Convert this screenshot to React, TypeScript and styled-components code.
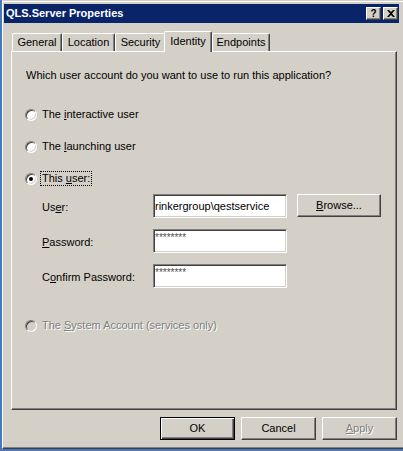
import React from "react";
import styled, { createGlobalStyle, css } from "styled-components";

const GlobalStyle = createGlobalStyle`
  html, body { margin: 0; padding: 0; background: #4a78b6; }
  body {
    font-family: "Liberation Sans", Arial, sans-serif;
    font-size: 11px;
    color: #000;
  }
  * { box-sizing: border-box; }
`;

const Window = styled.div`
  width: 401px;
  height: 449px;
  margin-left: 2px;
  background: #d4d0c8;
  border-top: 1px solid #d4d0c8;
  border-left: 1px solid #ffffff;
  border-bottom: 1px solid #404040;
  box-shadow: inset 0 1px #ffffff, inset 0 -1px #808080;
  padding: 3px 4px 0 1px;
  display: flex;
  flex-direction: column;
`;

const TitleBar = styled.div`
  height: 19px;
  background: #0a246a;
  display: flex;
  align-items: center;
  padding: 0 1px 0 2px;
  color: #fff;
  font-weight: bold;
  font-size: 11px;
`;

const TitleText = styled.span`
  flex: 1;
  line-height: 13px;
`;

const TitleButtons = styled.div`
  display: flex;
  gap: 2px;
`;

const CaptionButton = styled.div`
  width: 15px;
  height: 13px;
  background: #d4d0c8;
  border: 1px solid;
  border-color: #ffffff #404040 #404040 #ffffff;
  box-shadow: inset -1px -1px #808080;
  display: flex;
  align-items: center;
  justify-content: center;
  color: #000;
  font-weight: bold;
  font-size: 10px;
  line-height: 10px;
`;

const Client = styled.div`
  flex: 1;
  display: flex;
  flex-direction: column;
  padding: 8px 2px 0 7px;
`;

const TabStrip = styled.div`
  height: 20px;
  display: flex;
  align-items: flex-end;
  padding-left: 1px;
  position: relative;
  z-index: 1;
`;

const Tab = styled.div<{ $w: number; $active?: boolean }>`
  width: ${(p) => p.$w}px;
  height: 18px;
  background: #d4d0c8;
  border-top: 1px solid #ffffff;
  border-left: 1px solid #ffffff;
  border-right: 1px solid #404040;
  box-shadow: inset -1px 0 #808080;
  border-top-left-radius: 2px;
  border-top-right-radius: 2px;
  display: flex;
  align-items: center;
  justify-content: center;
  padding-bottom: 1px;
  ${(p) =>
    p.$active &&
    css`
      height: 21px;
      margin-bottom: -1px;
      margin-left: -2px;
      position: relative;
      z-index: 2;
      padding-bottom: 3px;
    `}
`;

const Panel = styled.div`
  height: 359px;
  border: 1px solid;
  border-color: #ffffff #404040 #404040 #ffffff;
  box-shadow: inset -1px -1px #808080;
  padding: 17px 0 0 14px;
  display: flex;
  flex-direction: column;
`;

const Prompt = styled.div`
  line-height: 13px;
`;

const RadioList = styled.div`
  display: flex;
  flex-direction: column;
  gap: 19px;
  margin-top: 26px;
  margin-left: -1px;
`;

const RadioRow = styled.div<{ $disabled?: boolean; $top?: number }>`
  display: flex;
  align-items: center;
  gap: 4px;
  height: 13px;
  margin-top: ${(p) => p.$top ?? 0}px;
  margin-left: ${(p) => (p.$top ? -1 : 0)}px;
  ${(p) =>
    p.$disabled &&
    css`
      color: #808080;
      text-shadow: 1px 1px #ffffff;
    `}
`;

const RadioCircle = styled.span<{ $checked?: boolean; $disabled?: boolean }>`
  width: 12px;
  height: 12px;
  border-radius: 50%;
  border: 1px solid;
  border-color: #808080 #ffffff #ffffff #808080;
  box-shadow: inset 1px 1px #404040, inset -1px -1px #d4d0c8;
  background: ${(p) => (p.$disabled ? "#d4d0c8" : "#ffffff")};
  position: relative;
  flex: none;
  ${(p) =>
    p.$checked &&
    css`
      &::after {
        content: "";
        position: absolute;
        left: 3px;
        top: 3px;
        width: 4px;
        height: 4px;
        border-radius: 50%;
        background: #000;
      }
    `}
`;

const RadioLabel = styled.span<{ $focused?: boolean }>`
  padding: 0 1px;
  line-height: 13px;
  outline: ${(p) => (p.$focused ? "1px dotted #000" : "none")};
`;

const FieldGrid = styled.div`
  display: grid;
  grid-template-columns: 101px 134px 84px;
  grid-auto-rows: 24px;
  column-gap: 10px;
  row-gap: 11px;
  margin-top: 9px;
  margin-left: 16px;
`;

const FieldLabel = styled.label`
  display: flex;
  align-items: center;
  padding-top: 1px;
  grid-column: 1;
`;

const TextBox = styled.div<{ $top?: boolean }>`
  grid-column: 2;
  background: #ffffff;
  border: 1px solid;
  border-color: #808080 #ffffff #ffffff #808080;
  box-shadow: inset 1px 1px #404040, inset -1px -1px #d4d0c8;
  padding: 1px 1px 0;
  display: flex;
  align-items: ${(p) => (p.$top ? "flex-start" : "center")};
  line-height: 13px;
  white-space: nowrap;
  overflow: hidden;
  color: ${(p) => (p.$top ? "#505050" : "#000")};
  font-size: ${(p) => (p.$top ? "10px" : "11px")};
`;

const buttonBase = css`
  height: 23px;
  background: #d4d0c8;
  border: 1px solid;
  border-color: #ffffff #404040 #404040 #ffffff;
  box-shadow: inset -1px -1px #808080;
  display: flex;
  align-items: center;
  justify-content: center;
  font-family: "Liberation Sans", Arial, sans-serif;
  font-size: 11px;
  color: #000;
  padding: 0 0 1px;
`;

const PushButton = styled.div<{ $default?: boolean; $disabled?: boolean; $w?: number }>`
  ${buttonBase};
  width: ${(p) => p.$w ?? 75}px;
  ${(p) =>
    p.$default &&
    css`
      border-color: #000;
      box-shadow: inset 1px 1px #ffffff, inset -1px -1px #404040,
        inset -2px -2px #808080;
    `}
  ${(p) =>
    p.$disabled &&
    css`
      color: #808080;
      text-shadow: 1px 1px #ffffff;
    `}
`;

const BrowseButton = styled(PushButton)`
  grid-column: 3;
  align-self: start;
`;

const ButtonBar = styled.div`
  display: flex;
  justify-content: flex-end;
  gap: 6px;
  margin-top: 7px;
`;

const CloseGlyph = () => (
  <svg width="8" height="7" viewBox="0 0 8 7">
    <path d="M0 0h2l2 2 2-2h2L5 3.5 8 7H6L4 5 2 7H0l3-3.5z" fill="#000" />
  </svg>
);

export default function App() {
  return (
    <>
      <GlobalStyle />
      <Window>
        <TitleBar>
          <TitleText>QLS.Server Properties</TitleText>
          <TitleButtons>
            <CaptionButton>?</CaptionButton>
            <CaptionButton>
              <CloseGlyph />
            </CaptionButton>
          </TitleButtons>
        </TitleBar>
        <Client>
          <TabStrip>
            <Tab $w={50}>General</Tab>
            <Tab $w={53}>Location</Tab>
            <Tab $w={51}>Security</Tab>
            <Tab $w={48} $active>
              Identity
            </Tab>
            <Tab $w={58}>Endpoints</Tab>
          </TabStrip>
          <Panel>
            <Prompt>Which user account do you want to use to run this application?</Prompt>
            <RadioList>
              <RadioRow>
                <RadioCircle />
                <RadioLabel>
                  The <u>i</u>nteractive user
                </RadioLabel>
              </RadioRow>
              <RadioRow>
                <RadioCircle />
                <RadioLabel>
                  The <u>l</u>aunching user
                </RadioLabel>
              </RadioRow>
              <RadioRow>
                <RadioCircle $checked />
                <RadioLabel $focused>
                  This <u>u</u>ser:
                </RadioLabel>
              </RadioRow>
            </RadioList>
            <FieldGrid>
              <FieldLabel>
                Us<u>e</u>r:
              </FieldLabel>
              <TextBox>rinkergroup\qestservice</TextBox>
              <BrowseButton $w={84}>
                <span>
                  <u>B</u>rowse...
                </span>
              </BrowseButton>
              <FieldLabel>
                <u>P</u>assword:
              </FieldLabel>
              <TextBox $top>********</TextBox>
              <FieldLabel>
                C<u>o</u>nfirm Password:
              </FieldLabel>
              <TextBox $top>********</TextBox>
            </FieldGrid>
            <RadioRow $disabled $top={31}>
              <RadioCircle $disabled />
              <RadioLabel>
                The <u>S</u>ystem Account (services only)
              </RadioLabel>
            </RadioRow>
          </Panel>
          <ButtonBar>
            <PushButton $default>OK</PushButton>
            <PushButton>Cancel</PushButton>
            <PushButton $disabled>
              <span>
                <u>A</u>pply
              </span>
            </PushButton>
          </ButtonBar>
        </Client>
      </Window>
    </>
  );
}
